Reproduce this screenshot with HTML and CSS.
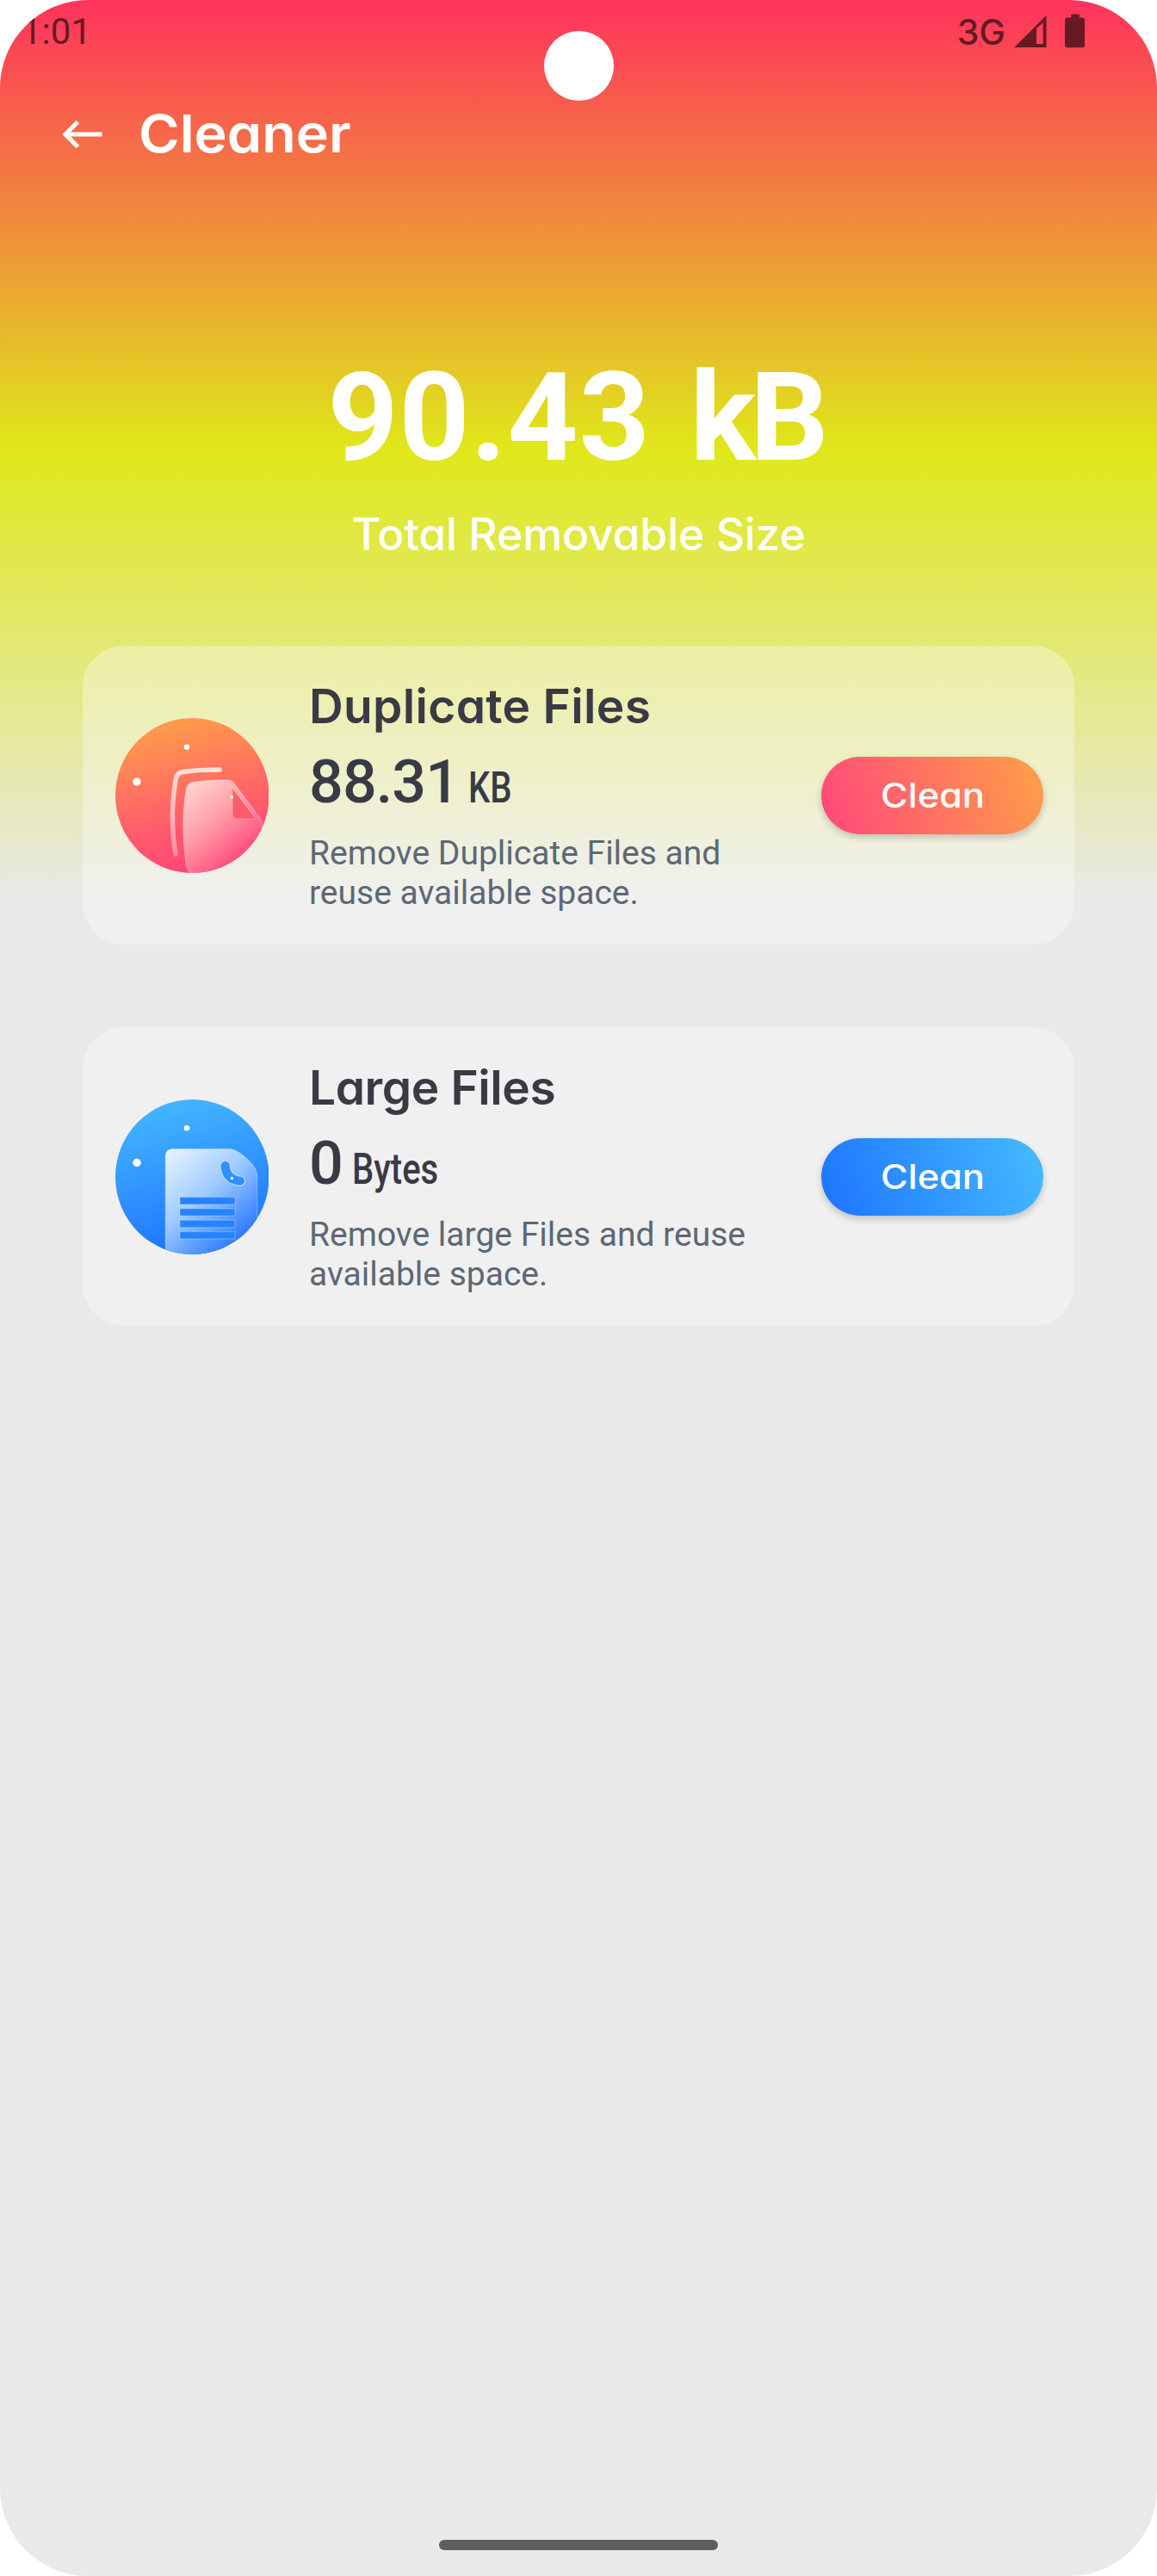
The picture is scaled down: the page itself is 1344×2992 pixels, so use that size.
FILE: index.html
```
<!DOCTYPE html>
<html lang="en">
<head>
<meta charset="utf-8">
<title>Cleaner</title>
<link rel="stylesheet" href="styles.css">
</head>
<body>
<div class="screen">
  <div class="camera"></div>
  <div class="status">
    <span class="time">1:01</span>
    <div class="status-right">
      <span class="network">3G</span>
      <svg class="status-icons" width="82" height="40" viewBox="0 0 82 40">
        <path fill-rule="evenodd" d="M.2 39 37.5 1.700V39zM26 16.800V35H33.700V10.500z"/>
        <path d="M66.300.5h9.600V4.500h3.200a3 3 0 0 1 3 3V36.300a3 3 0 0 1-3 3H62a3 3 0 0 1-3-3V7.500a3 3 0 0 1 3-3h4.300z"/>
      </svg>
    </div>
  </div>
  <header class="header">
    <svg class="back" width="48" height="34" viewBox="0 0 48 34">
      <path d="M47.500 18H6M19.500 3.500 5 18l14.500 14.500"/>
    </svg>
    <h1 class="title">Cleaner</h1>
  </header>
  <section class="hero">
    <div class="total">90.43 <span class="total-unit">k</span>B</div>
    <div class="caption">Total Removable Size</div>
  </section>
  <main class="cards">
    <article class="card">
      <svg class="icon" width="178" height="180" viewBox="0 0 178 180">
        <defs>
          <linearGradient id="warm" x1=".35" y1="0" x2=".6" y2="1">
            <stop offset=".05" stop-color="#ff994c"/><stop offset=".62" stop-color="#ff5f6a"/><stop offset="1" stop-color="#ff4377"/>
          </linearGradient>
          <linearGradient id="sheetWarm" gradientUnits="userSpaceOnUse" x1="82" y1="74" x2="152" y2="158">
            <stop offset="0" stop-color="#ffd8d3"/><stop offset=".5" stop-color="#ff9fa8"/><stop offset="1" stop-color="#ff4a7c"/>
          </linearGradient>
          <linearGradient id="edgeWarm" gradientUnits="userSpaceOnUse" x1="80" y1="60" x2="70" y2="160">
            <stop offset="0" stop-color="#ffe0d8"/><stop offset="1" stop-color="#ff8ea4"/>
          </linearGradient>
          <clipPath id="disc"><ellipse cx="89.300" cy="90" rx="89.300" ry="90"/></clipPath>
        </defs>
        <ellipse cx="89.300" cy="90" rx="89.300" ry="90" fill="url(#warm)"/>
        <g clip-path="url(#disc)">
          <path d="M121 60Q95 60 79 62.500Q72 63.500 70.500 70Q62.500 112 70 158" fill="none" stroke="url(#edgeWarm)" stroke-width="5.500" stroke-linecap="round"/>
          <path fill="url(#sheetWarm)" fill-rule="evenodd" stroke="#fff" stroke-opacity=".25" stroke-width="1.200" d="M90 74.500Q110 71 133 72Q136 72.500 138 75.500L168 116Q170 119 170 124V180H90Q84 179 82.500 172Q75 120 82.500 82Q84 75.500 90 74.500zM136 81V112Q136 117 141 117H163z"/>
        </g>
        <g fill="#fff"><circle cx="83" cy="33.700" r="3.300"/><circle cx="25" cy="74" r="4.700"/><circle cx="135.300" cy="91.700" r="1.700"/></g>
      </svg>
      <div class="info">
        <h2 class="name">Duplicate Files</h2>
        <div class="size"><span class="number">88.31</span><span class="unit">KB</span></div>
        <p class="desc">Remove Duplicate Files and<br>reuse available space.</p>
      </div>
      <button class="clean clean-warm"><span class="clean-label">Clean</span></button>
    </article>
    <article class="card">
      <svg class="icon" width="178" height="180" viewBox="0 0 178 180">
        <defs>
          <linearGradient id="cool" x1=".35" y1="0" x2=".6" y2="1">
            <stop offset=".05" stop-color="#42b3ff"/><stop offset="1" stop-color="#1c72ff"/>
          </linearGradient>
          <linearGradient id="sheetCool" gradientUnits="userSpaceOnUse" x1="62" y1="56" x2="150" y2="156">
            <stop offset="0" stop-color="#e8f4ff"/><stop offset=".5" stop-color="#a0ccff"/><stop offset="1" stop-color="#2e7cff"/>
          </linearGradient>
        </defs>
        <ellipse cx="89.300" cy="90" rx="89.300" ry="90" fill="url(#cool)"/>
        <g clip-path="url(#disc)">
          <path fill="url(#sheetCool)" stroke="#fff" stroke-opacity=".25" stroke-width="1.200" d="M58.300 185V65a7.500 7.500 0 0 1 7.500-7.500H133C142 57.500 164.700 76 164.700 88V185z"/>
          <path d="M127.700 77Q128.500 93 145 94.700" fill="none" stroke="#b8dbff" stroke-width="12.500" stroke-linecap="round"/>
          <path d="M127.700 77Q128.500 93 145 94.700" fill="none" stroke="#2f90ff" stroke-width="10" stroke-linecap="round"/>
          <g fill="#2583ff" stroke="#fff" stroke-opacity=".22" stroke-width="1.500">
            <path d="M75 113.500h64v8.500H75zM75 126.800h64v8.500H75zM75 140.200h64v8.500H75zM75 153.500h64v8.500H75z"/>
          </g>
        </g>
        <g fill="#fff"><circle cx="83" cy="33.300" r="3.300"/><circle cx="25" cy="73.500" r="4.700"/><circle cx="135.300" cy="91.500" r="1.700"/></g>
      </svg>
      <div class="info">
        <h2 class="name name-tight">Large Files</h2>
        <div class="size"><span class="number">0</span><span class="unit">Bytes</span></div>
        <p class="desc">Remove large Files and reuse<br>available space.</p>
      </div>
      <button class="clean clean-cool"><span class="clean-label">Clean</span></button>
    </article>
  </main>
  <div class="handle"></div>
</div>
</body>
</html>
```
FILE: styles.css
```
* { box-sizing: border-box; }

body { margin: 0; background: #fff; }

h1, h2, p { margin: 0; }

.screen {
  position: relative;
  display: flex;
  flex-direction: column;
  width: 1344px;
  height: 2992px;
  overflow: hidden;
  border-radius: 102px;
  background: linear-gradient(180deg, #ff335c 0, #dfe81a 523px, #e9e9e9 1047px);
  font-family: Inter, "Liberation Sans", sans-serif;
  font-feature-settings: "cv11";
}

.camera {
  position: absolute;
  top: 35.5px;
  left: 631.5px;
  width: 81px;
  height: 81px;
  border-radius: 50%;
  background: #fff;
}

.status {
  display: flex;
  align-items: center;
  justify-content: space-between;
  height: 74px;
  padding: 0 84px 0 25px;
  color: #651a24;
}

.time { font: 400 42px/48px Roboto, sans-serif; }

.status-right { display: flex; align-items: center; gap: 10px; }

.network { font-size: 41px; font-weight: 500; line-height: 48px; }

.status-icons { display: block; fill: currentColor; margin-top: -3px; }

.header {
  display: flex;
  align-items: center;
  height: 162px;
  padding-left: 71px;
  gap: 42px;
  color: #fff;
}

.back { fill: none; stroke: currentColor; stroke-width: 5.2; }

.title {
  font-size: 61px;
  font-weight: 600;
  line-height: 80px;
  transform: scaleX(1.06);
  transform-origin: left;
}

.hero {
  padding-top: 169px;
  color: #fff;
  text-align: center;
}

.total {
  font: 700 143px/160px Roboto, sans-serif;
  letter-spacing: 1.2px;
  word-spacing: 9px;
}

.total-unit { letter-spacing: -7px; }

.caption {
  margin-top: 26px;
  font-size: 52px;
  font-weight: 500;
  line-height: 60px;
  letter-spacing: -0.35px;
}

.cards {
  display: flex;
  flex-direction: column;
  gap: 96px;
  padding: 99px 96px 0;
}

.card {
  display: flex;
  align-items: center;
  height: 347px;
  padding: 0 36px 0 38px;
  border-radius: 48px;
  background: rgba(255, 255, 255, 0.33);
}

.icon { display: block; flex: none; }

.info { flex: 1; margin-left: 47px; color: #393a44; }

.name {
  font-size: 55px;
  font-weight: 600;
  line-height: 66px;
  letter-spacing: 0.35px;
}

.name-tight { letter-spacing: -0.4px; }

.size {
  margin-top: 12px;
  height: 86px;
  font-family: Roboto, sans-serif;
  line-height: 86px;
  white-space: nowrap;
}

.number { font-size: 70px; font-weight: 500; letter-spacing: -0.9px; }

.unit {
  display: inline-block;
  margin-left: 11px;
  font-size: 50px;
  font-weight: 500;
  transform: scaleX(0.8);
  transform-origin: left;
}

.desc {
  margin-top: 17px;
  color: #5c6875;
  font: 400 39px/46px Roboto, sans-serif;
  white-space: nowrap;
}

.clean {
  flex: none;
  width: 258px;
  height: 90px;
  padding: 0;
  border: 0;
  border-radius: 45px;
  box-shadow: 0 4px 8px rgba(0, 0, 0, 0.2);
  color: #fff;
  font: 500 39px/48px Inter, sans-serif;
  font-feature-settings: "cv11";
}

.clean-label { display: inline-block; transform: scaleX(1.11); }

.clean-warm { background: linear-gradient(70deg, #ff4b78 5%, #ff994b 92%); }

.clean-cool { background: linear-gradient(70deg, #1f77ff 5%, #42b6ff 92%); }

.handle {
  width: 324px;
  height: 12px;
  margin: auto auto 30px;
  border-radius: 6px;
  background: #5e5e5e;
}
```
